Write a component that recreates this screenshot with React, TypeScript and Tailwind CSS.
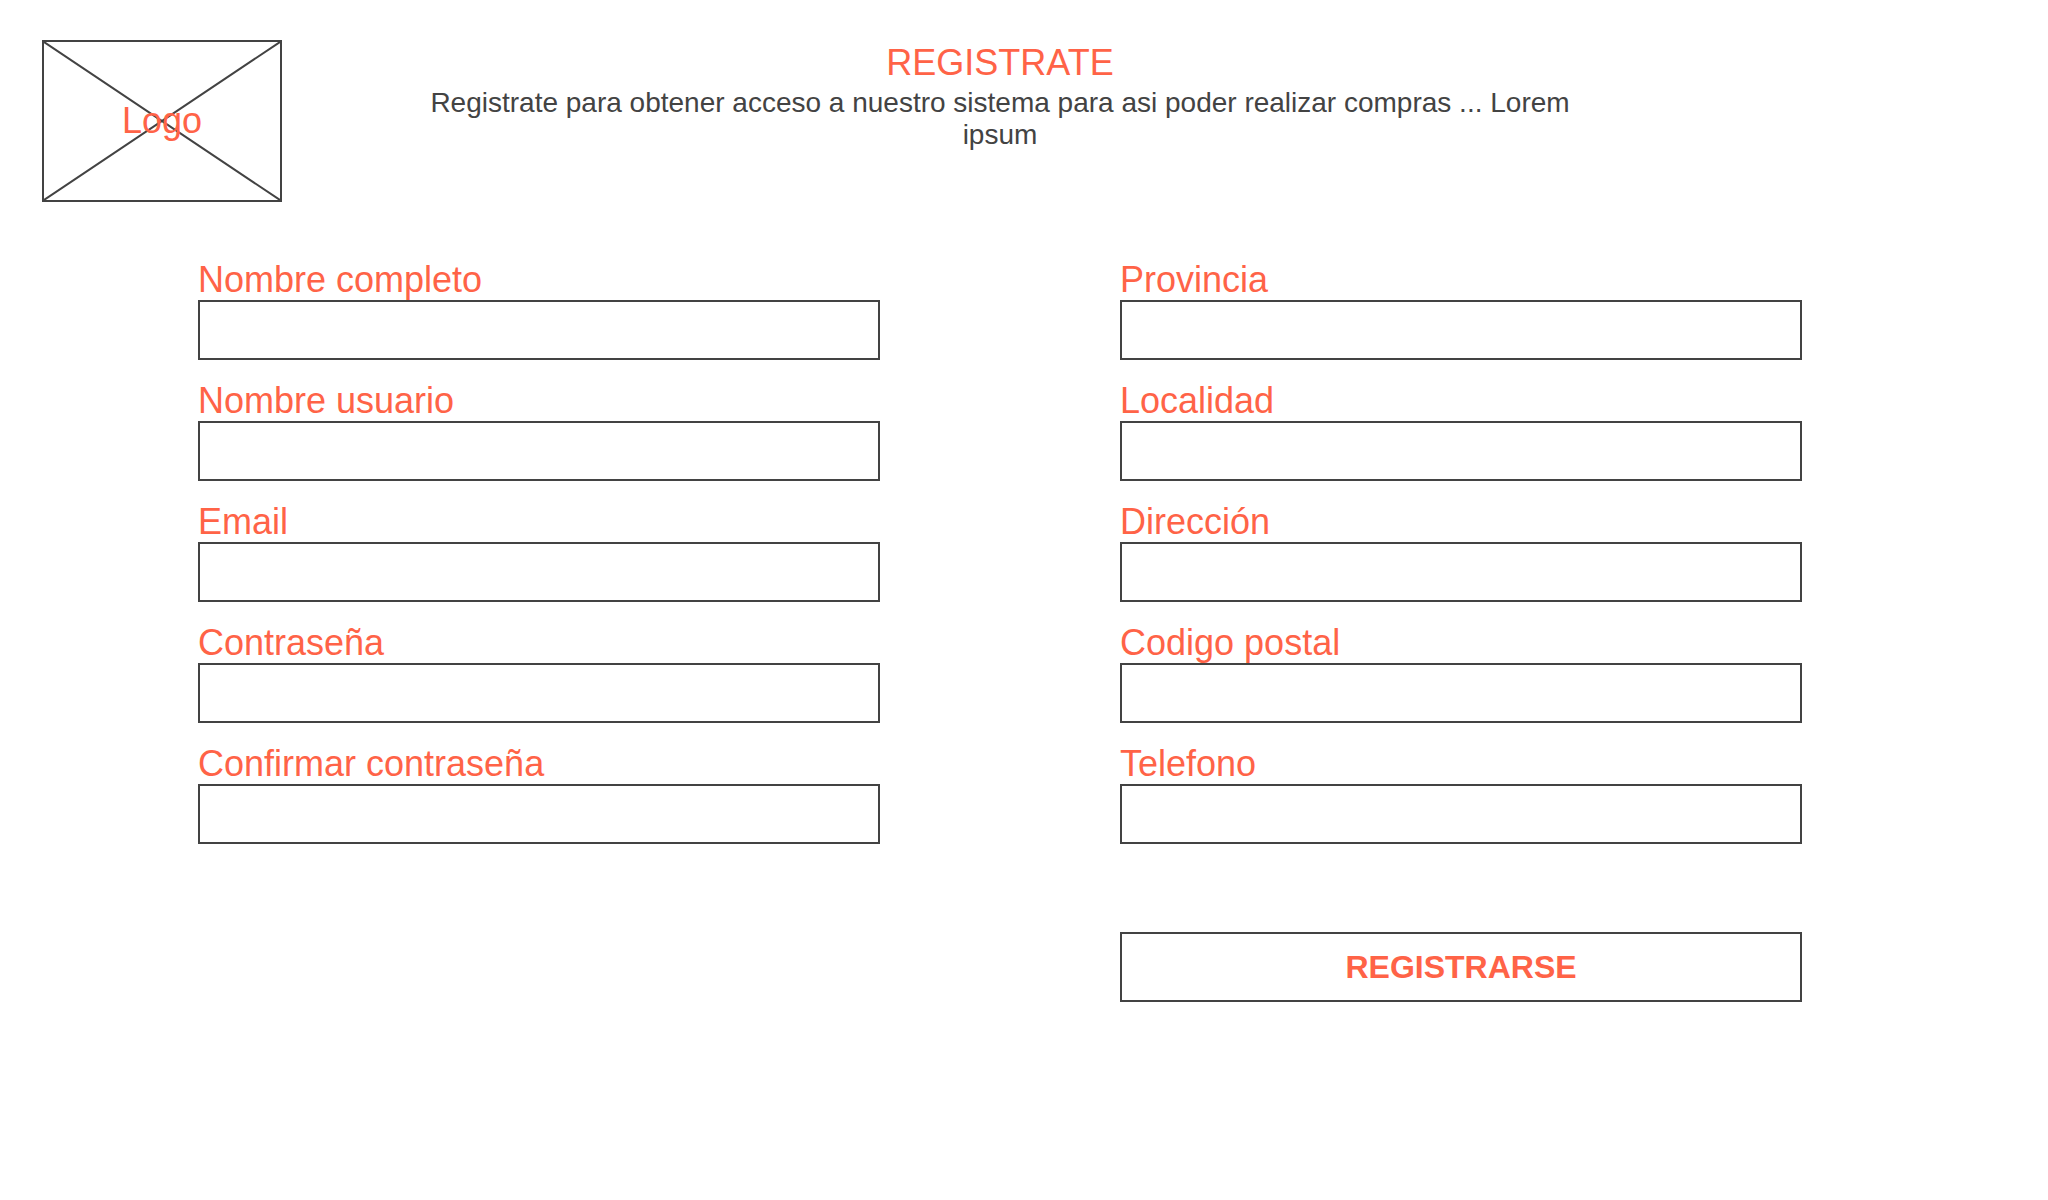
import { useId } from "react";
import type { HTMLInputTypeAttribute } from "react";

type FieldSpec = {
  name: string;
  label: string;
  type: HTMLInputTypeAttribute;
};

const accountFields: FieldSpec[] = [
  { name: "fullName", label: "Nombre completo", type: "text" },
  { name: "userName", label: "Nombre usuario", type: "text" },
  { name: "email", label: "Email", type: "email" },
  { name: "password", label: "Contraseña", type: "password" },
  { name: "passwordConfirm", label: "Confirmar contraseña", type: "password" },
];

const addressFields: FieldSpec[] = [
  { name: "province", label: "Provincia", type: "text" },
  { name: "city", label: "Localidad", type: "text" },
  { name: "address", label: "Dirección", type: "text" },
  { name: "postalCode", label: "Codigo postal", type: "text" },
  { name: "phone", label: "Telefono", type: "tel" },
];

function Logo() {
  return (
    <div className="relative flex h-[162px] w-60 shrink-0 items-center justify-center border-2 border-[#434343]">
      <svg
        className="absolute inset-0 size-full"
        viewBox="0 0 236 158"
        preserveAspectRatio="none"
        stroke="#434343"
        strokeWidth="2"
        aria-hidden="true"
      >
        <path d="M0 0L236 158M236 0L0 158" />
      </svg>
      <span className="relative text-4xl text-[#ff6347]">Logo</span>
    </div>
  );
}

function Field({ name, label, type }: FieldSpec) {
  const id = useId();
  return (
    <div className="flex flex-col">
      <label htmlFor={id} className="text-4xl text-[#ff6347]">
        {label}
      </label>
      <input
        id={id}
        name={name}
        type={type}
        className="h-15 w-full border-2 border-[#434343] bg-white px-4 text-[28px] text-[#434343] outline-none focus:border-[#ff6347]"
      />
    </div>
  );
}

export default function App() {
  return (
    <main className="min-h-screen bg-white pt-10 pr-12 pb-10 font-['Liberation_Sans',Arial,sans-serif]">
      <header className="flex items-start px-[42px]">
        <Logo />
        <div className="flex flex-1 flex-col items-center gap-1 pt-[3px] text-center">
          <h1 className="text-4xl text-[#ff6347]">REGISTRATE</h1>
          <p className="max-w-[1200px] text-[28px] leading-8 text-[#434343]">
            Registrate para obtener acceso a nuestro sistema para asi poder
            realizar compras ... Lorem ipsum
          </p>
        </div>
        <div className="w-60 shrink-0" />
      </header>

      <form
        className="flex items-start gap-60 px-[198px] pt-[58px]"
        onSubmit={(event) => event.preventDefault()}
      >
        <div className="flex flex-1 flex-col gap-[21px]">
          {accountFields.map((field) => (
            <Field key={field.name} {...field} />
          ))}
        </div>
        <div className="flex flex-1 flex-col">
          <div className="flex flex-col gap-[21px]">
            {addressFields.map((field) => (
              <Field key={field.name} {...field} />
            ))}
          </div>
          <button
            type="submit"
            className="mt-[88px] h-[70px] w-full border-2 border-[#434343] bg-white text-[32px] font-bold text-[#ff6347]"
          >
            REGISTRARSE
          </button>
        </div>
      </form>
    </main>
  );
}
